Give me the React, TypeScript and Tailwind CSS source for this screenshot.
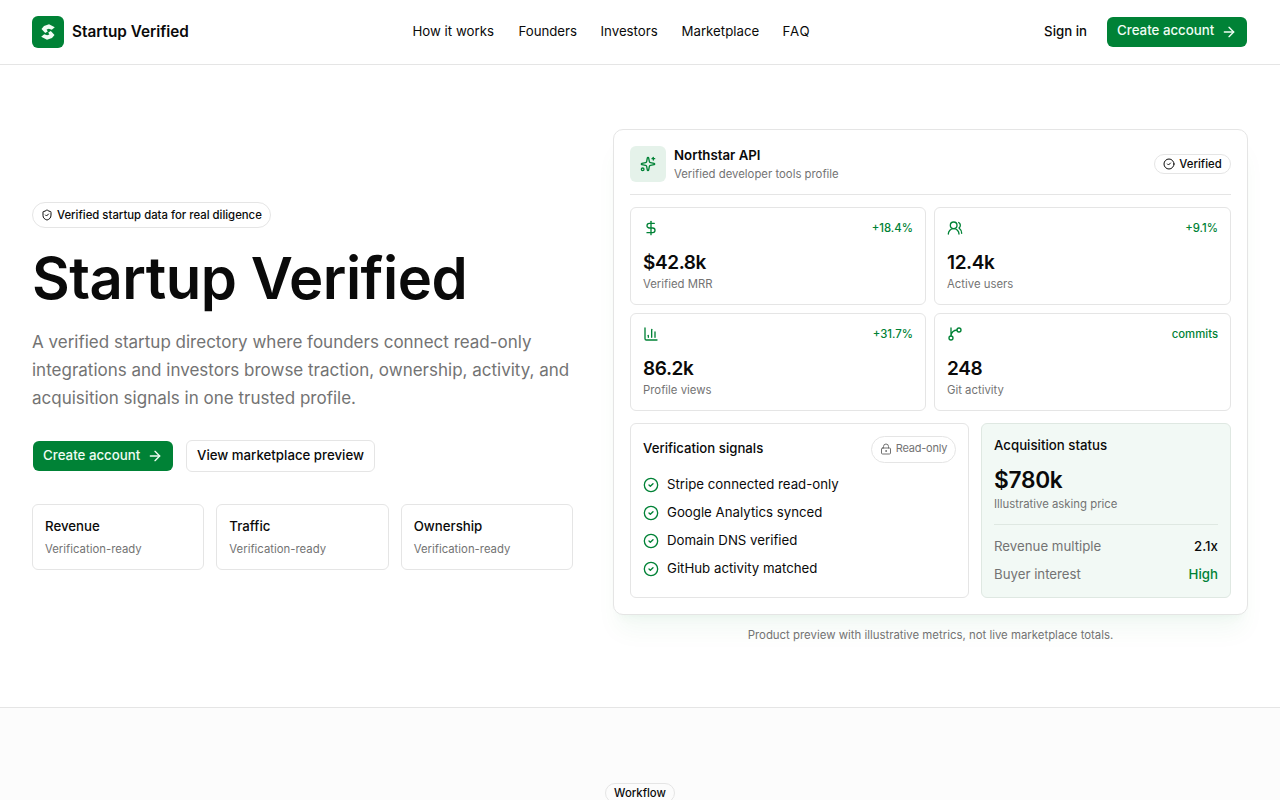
import {
  ArrowRight,
  ChartColumn,
  CircleCheck,
  DollarSign,
  LockKeyhole,
  ShieldCheck,
  Sparkles,
  UsersRound,
} from "lucide-react";

const GitBranchIcon = ({ size = 16 }: { size?: number }) => (
  <svg
    width={size}
    height={size}
    viewBox="0 0 24 24"
    fill="none"
    stroke="currentColor"
    strokeWidth="2"
    strokeLinecap="round"
    strokeLinejoin="round"
  >
    <path d="M15 6a9 9 0 0 0-9 9V3" />
    <circle cx="18" cy="6" r="3" />
    <circle cx="6" cy="18" r="3" />
  </svg>
);

const navLinks = [
  { label: "How it works", className: "w-[82px]" },
  { label: "Founders", className: "w-[58px] tracking-[-0.05px]" },
  { label: "Investors", className: "w-[57px]" },
  { label: "Marketplace", className: "w-[77px]" },
  { label: "FAQ", className: "w-[29px] tracking-[0.8px]" },
];

const proofs = ["Revenue", "Traffic", "Ownership"];

const metrics = [
  { icon: DollarSign, value: "$42.8k", label: "Verified MRR", change: "+18.4%" },
  { icon: UsersRound, value: "12.4k", label: "Active users", change: "+9.1%" },
  { icon: ChartColumn, value: "86.2k", label: "Profile views", change: "+31.7%" },
  { icon: GitBranchIcon, value: "248", label: "Git activity", change: "commits" },
];

const signals = [
  "Stripe connected read-only",
  "Google Analytics synced",
  "Domain DNS verified",
  "GitHub activity matched",
];

const Logo = () => (
  <span className="flex size-8 items-center justify-center rounded-md bg-[#008236]">
    <svg width="32" height="32" viewBox="0 0 32 32" fill="#f0fdf4">
      <path d="M9.5 13 12 10 17 8.2 22.8 11.2 19.8 13.8 16.8 12.8 14.6 13.6 15.8 15.4 13.2 17Z" />
      <path d="M22.5 19 20 22 15 23.8 9.2 20.8 12.2 18.2 15.2 19.2 17.4 18.4 16.2 16.6 18.8 15Z" />
    </svg>
  </span>
);

const CreateButton = () => (
  <button className="flex h-[30px] w-[140px] items-center justify-between rounded-md bg-[#008236] px-2.5 text-[13.3px] font-medium whitespace-nowrap text-[#f0fdf4]">
    <span className="pb-px">Create account</span>
    <ArrowRight size={16} />
  </button>
);

const Header = () => (
  <header className="flex h-[65px] items-center justify-between border-b border-[#e5e5e5] px-8 pb-px">
    <div className="flex w-[380px] items-center gap-2">
      <Logo />
      <span className="pt-px text-[15.3px] font-semibold">Startup Verified</span>
    </div>
    <nav className="flex gap-6 pt-px text-[13.25px]">
      {navLinks.map((link) => (
        <a key={link.label} className={`whitespace-nowrap ${link.className}`}>
          {link.label}
        </a>
      ))}
    </nav>
    <div className="flex w-[436px] items-center justify-end gap-5 pr-px">
      <a className="pt-px text-[13.25px] font-medium">Sign in</a>
      <CreateButton />
    </div>
  </header>
);

const HeroText = () => (
  <div>
    <span className="flex h-[26px] w-[239px] items-center gap-1 rounded-full border border-[#e5e5e5] px-2 text-[11.35px] font-medium whitespace-nowrap">
      <ShieldCheck size={12} className="shrink-0" />
      <span className="pt-px">Verified startup data for real diligence</span>
    </span>
    <h1 className="mt-5 text-[58px] leading-[60px] font-semibold tracking-[-0.5px] whitespace-nowrap">
      Startup Verified
    </h1>
    <p className="mt-5 text-[17px] leading-7 whitespace-nowrap text-[#737373]">
      A verified startup directory where founders connect read-only
      <br />
      integrations and investors browse traction, ownership, activity, and
      <br />
      acquisition signals in one trusted profile.
    </p>
    <div className="mt-7 flex items-center gap-[13px] pl-px">
      <CreateButton />
      <button className="h-8 w-[189px] rounded-md border border-[#e5e5e5] pb-px text-[13.25px] font-medium whitespace-nowrap">
        View marketplace preview
      </button>
    </div>
    <div className="mt-8 grid grid-cols-3 gap-3">
      {proofs.map((proof) => (
        <div key={proof} className="h-[66px] rounded-md border border-[#e5e5e5] px-3 pt-[11px]">
          <p className="text-[13.25px] leading-5 font-medium">{proof}</p>
          <p className="mt-[5px] text-[11.35px] leading-4 text-[#737373]">Verification-ready</p>
        </div>
      ))}
    </div>
  </div>
);

const Metrics = () => (
  <div className="mt-3 grid grid-cols-[296px_297px] gap-2">
    {metrics.map(({ icon: Icon, value, label, change }) => (
      <div key={label} className="h-[98px] rounded-md border border-[#e5e5e5] p-3">
        <div className="flex h-4 items-center justify-between text-[11.35px] font-medium text-[#008236]">
          <Icon size={16} />
          <span>{change}</span>
        </div>
        <p className="mt-[13px] text-[19px] leading-7 font-semibold tracking-[-0.4px]">{value}</p>
        <p className="-mt-px text-[11.35px] leading-4 text-[#737373]">{label}</p>
      </div>
    ))}
  </div>
);

const Preview = () => (
  <div>
    <div className="h-[486px] rounded-[10px] border border-[#e5e5e5] bg-white p-4 shadow-[0_20px_25px_-5px_rgba(0,130,54,0.05),0_8px_10px_-6px_rgba(0,130,54,0.05)]">
      <div className="flex h-[49px] items-start justify-between border-b border-[#e5e5e5]">
        <div className="flex gap-2">
          <span className="flex size-9 items-center justify-center rounded-md bg-[#e5f2ea] text-[#008236]">
            <Sparkles size={16} />
          </span>
          <div>
            <p className="-mt-px text-[13.25px] leading-5 font-semibold">Northstar API</p>
            <p className="mt-px text-[11.35px] leading-4 text-[#737373]">Verified developer tools profile</p>
          </div>
        </div>
        <span className="mt-2 flex h-5 w-[77px] items-center justify-center gap-1 rounded-full border border-[#e5e5e5] text-[11.35px] font-medium">
          <CircleCheck size={12} />
          <span className="pt-px">Verified</span>
        </span>
      </div>
      <Metrics />
      <div className="mt-3 grid grid-cols-[339px_1fr] gap-3">
        <div className="h-[175px] rounded-md border border-[#e5e5e5] p-3">
          <div className="flex h-[26px] items-center justify-between">
            <p className="text-[13.2px] font-medium">Verification signals</p>
            <span className="flex h-[27px] w-[85px] items-center justify-center gap-1 rounded-full border border-[#e5e5e5] text-[11px] tracking-[-0.2px] text-[#737373]">
              <LockKeyhole size={12} />
              <span className="pb-px">Read-only</span>
            </span>
          </div>
          <ul className="mt-3 flex flex-col gap-2 text-[13.25px] leading-5">
            {signals.map((signal) => (
              <li key={signal} className="flex items-center gap-2">
                <CircleCheck size={16} className="relative top-px text-[#008236]" />
                {signal}
              </li>
            ))}
          </ul>
        </div>
        <div className="h-[175px] rounded-md border border-[#dfe8e2] bg-[#f2f9f5] p-3">
          <p className="-mt-px text-[13.25px] leading-5 font-medium">Acquisition status</p>
          <p className="mt-[9px] text-[22.7px] leading-8 font-semibold tracking-[-0.3px]">$780k</p>
          <p className="text-[11.35px] leading-4 text-[#737373]">Illustrative asking price</p>
          <div className="mt-3 flex flex-col gap-2 border-t border-[#dfe8e2] pt-[11px] text-[13.25px] leading-5">
            <div className="flex justify-between">
              <span className="text-[#737373]">Revenue multiple</span>
              <span className="font-medium">2.1x</span>
            </div>
            <div className="flex justify-between">
              <span className="text-[#737373]">Buyer interest</span>
              <span className="font-medium text-[#008236]">High</span>
            </div>
          </div>
        </div>
      </div>
    </div>
    <p className="mt-3 text-center text-[11.4px] leading-4 text-[#737373]">
      Product preview with illustrative metrics, not live marketplace totals.
    </p>
  </div>
);

export default function App() {
  return (
    <div className="h-[800px] overflow-hidden bg-white font-['Inter',sans-serif] text-[#0a0a0a]">
      <Header />
      <main className="grid h-[643px] grid-cols-[541px_635px] items-center gap-10 border-b border-[#e5e5e5] px-8">
        <HeroText />
        <Preview />
      </main>
      <section className="flex h-[92px] justify-center bg-[#fcfcfc] pt-[75px]">
        <span className="flex h-5 w-[70px] items-center justify-center rounded-full border border-[#e5e5e5] pt-px text-[11.35px] font-medium">
          Workflow
        </span>
      </section>
    </div>
  );
}
